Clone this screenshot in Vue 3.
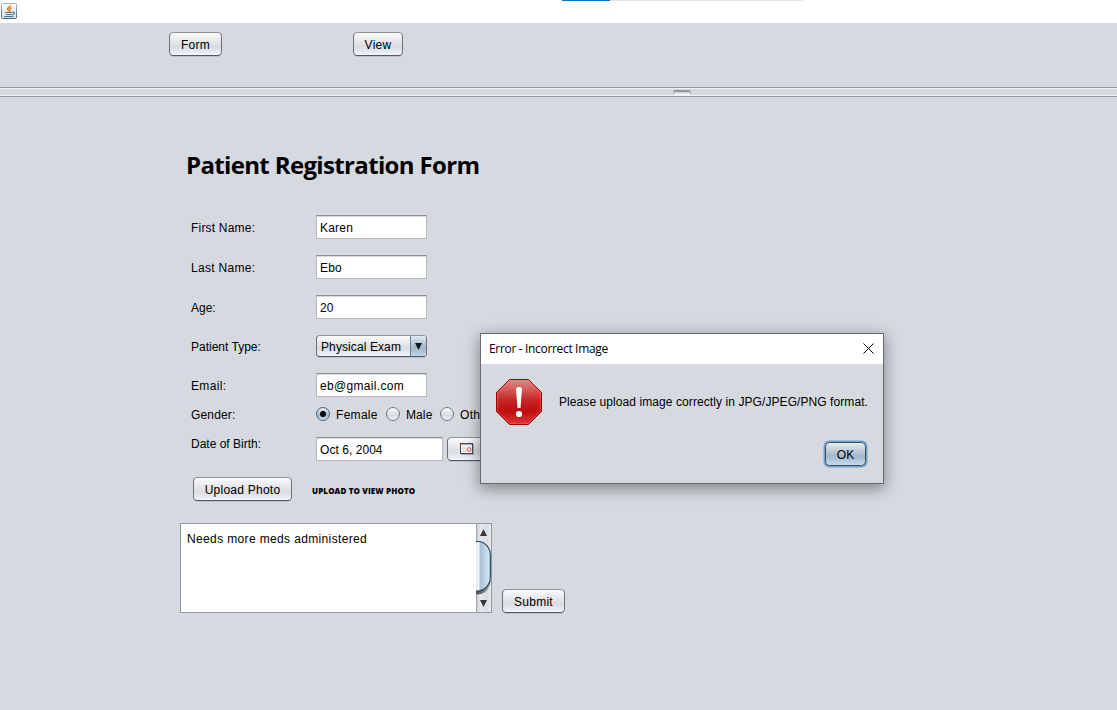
<script setup>
import { ref } from 'vue'

const fields = [
  { label: 'First Name:', value: 'Karen', key: 'first' },
  { label: 'Last Name:', value: 'Ebo', key: 'last' },
  { label: 'Age:', value: '20', key: 'age' },
]
const genders = ['Female', 'Male', 'Other']
const gender = ref('Female')
</script>

<template>
  <div class="window">
    <header class="titlebar">
      <svg class="java" viewBox="0 0 16 16" width="16" height="16">
        <defs>
          <linearGradient id="jv" x1="0" y1="0" x2="0" y2="1">
            <stop offset="0" stop-color="#fff" /><stop offset="1" stop-color="#d5e0e8" />
          </linearGradient>
          <linearGradient id="jb" x1="0" y1="0" x2="0" y2="1">
            <stop offset="0" stop-color="#9fb1bf" /><stop offset="1" stop-color="#456b88" />
          </linearGradient>
        </defs>
        <rect x=".5" y=".5" width="15" height="15" rx="1" fill="url(#jv)" stroke="url(#jb)" />
        <path d="M9.4 2.2C9.800 4 6 4.600 6.500 6.200c.2.8 1.200 1.200 1.200 2.300M10.800 4.600C8.500 5.400 8 6 8.900 6.900c.5.7.2 1.200-.4 1.800" fill="none" stroke="#e8811c" stroke-width="1.400" />
        <path d="M4 9.500h7.500M5 11.500h5.800M3.200 13.500h9M11.500 9.400c2.800-.6 2.600 2-.3 2.400" fill="none" stroke="#4f7593" stroke-width="1.200" />
      </svg>
      <div class="progress"><i></i></div>
    </header>

    <nav class="toolbar">
      <button class="btn form-btn">Form</button>
      <button class="btn view-btn">View</button>
    </nav>
    <div class="divider"><i class="grip"></i></div>

    <main class="form">
      <h1>Patient Registration Form</h1>
      <div v-for="f in fields" :key="f.key" class="row">
        <label :class="'l-' + f.key"><span>{{ f.label }}</span></label>
        <div class="input"><span :class="'v-' + f.key">{{ f.value }}</span></div>
      </div>
      <div class="row type-row">
        <label class="l-type"><span>Patient Type:</span></label>
        <div class="combo">
          <span class="combo-text">Physical Exam</span>
          <span class="arrow"><svg width="7" height="7" viewBox="0 0 7 7"><path d="M0 0h7L3.800 6.500h-.6z" fill="#101820" /></svg></span>
        </div>
      </div>
      <div class="row email-row">
        <label class="l-email"><span>Email:</span></label>
        <div class="input"><span class="v-email">eb@gmail.com</span></div>
      </div>
      <div class="row gender-row">
        <label class="l-gender"><span>Gender:</span></label>
        <div v-for="g in genders" :key="g" class="option" :class="'o-' + g.toLowerCase()" @click="gender = g">
          <i class="radio" :class="{ on: gender === g }"></i><span>{{ g }}</span>
        </div>
      </div>
      <div class="row date-row">
        <label class="l-dob"><span>Date of Birth:</span></label>
        <div class="input date"><span class="v-date">Oct 6, 2004</span></div>
        <button class="btn cal">
          <svg width="14" height="12" viewBox="0 0 14 12">
            <path d="M1 11.500h13M13.500 1v11" stroke="#aaa" />
            <rect x=".5" y=".5" width="12" height="10" fill="#f5f2f0" stroke="#454b53" />
            <path d="M1 1.500h4" stroke="#f3a63c" /><path d="M5 1.500h7" stroke="#8ab4e6" />
            <path d="M3.500 3v7M5.500 3v7M1 5.500h5M1 8h5" stroke="#ddd" stroke-width=".7" />
            <circle cx="9" cy="6.500" r="1.800" fill="#fff" stroke="#e86060" stroke-width="1.100" />
          </svg>
        </button>
      </div>
      <div class="upload-row">
        <button class="btn upload"><span>Upload Photo</span></button>
        <span class="hint">UPLOAD TO VIEW PHOTO</span>
      </div>
      <div class="notes-row">
        <div class="notes">
          <p><span>Needs more meds administered</span></p>
          <svg class="scroll" width="15" height="88" viewBox="0 0 15 88">
            <defs>
              <linearGradient id="tr"><stop offset="0" stop-color="#c7c8cc" /><stop offset=".3" stop-color="#e6e7ea" /><stop offset=".75" stop-color="#dddee1" /><stop offset="1" stop-color="#edeef0" /></linearGradient>
              <linearGradient id="th"><stop offset="0" stop-color="#dfe9f2" /><stop offset=".18" stop-color="#f4f8fb" /><stop offset=".3" stop-color="#aac0d5" /><stop offset=".55" stop-color="#b9cfe2" /><stop offset="1" stop-color="#d9f0ff" /></linearGradient>
              <linearGradient id="sh"><stop offset="0" stop-color="#44484e" /><stop offset="1" stop-color="#b4b5b9" /></linearGradient>
            </defs>
            <path d="M0 0h15v88H0z" fill="url(#tr)" />
            <path d="M.5 0v88" stroke="#a0a3ab" />
            <path d="M7.500 5 11 12H4zM4 76h7L7.500 83z" fill="#34373d" />
            <path d="M0 66h4c5 0 9-5 10-11l1 3c-2 8-6 12.500-15 12.500z" fill="url(#sh)" />
            <path d="M0 17.500h2C9 17.500 14.300 24 14.300 31v22c0 8-6 14-12.300 14H0z" fill="url(#th)" />
            <path d="M0 17.500h2C9 17.500 14.300 24 14.300 31v22c0 8-6 14-12.300 14H0" fill="none" stroke="#2d465d" stroke-width="1.200" />
          </svg>
        </div>
        <button class="btn submit">Submit</button>
      </div>
    </main>

    <section class="dialog">
      <header>
        <span class="dlg-title">Error - Incorrect Image</span>
        <svg width="11" height="11" viewBox="0 0 11 11"><path d="M.5.5l10 10M10.500.5l-10 10" stroke="#000" stroke-width="1" /></svg>
      </header>
      <div class="message">
        <svg width="46" height="46" viewBox="0 0 46 46">
          <defs>
            <linearGradient id="er" x1="0" y1="0" x2="0" y2="1"><stop offset="0" stop-color="#e38b8b" /><stop offset=".45" stop-color="#c42828" /><stop offset=".7" stop-color="#bb0d0d" /><stop offset="1" stop-color="#e23535" /></linearGradient>
          </defs>
          <path d="M13.500.5h19l13 13v19l-13 13h-19l-13-13v-19z" fill="url(#er)" stroke="#a80000" />
          <path d="M14 1.700h18L44.300 14v18L32 44.300H14L1.700 32V14z" fill="none" stroke="#f07070" stroke-opacity=".55" />
          <path d="M20 10C20 7.300 26 7.300 26 10L24.500 29h-3z" fill="#fff" />
          <circle cx="23" cy="35" r="3.100" fill="#fff" />
        </svg>
        <span class="msg">Please upload image correctly in JPG/JPEG/PNG format.</span>
      </div>
      <button class="btn ok"><span>OK</span></button>
    </section>
  </div>
</template>

<style>
body { margin: 0; background: #d6d9e0; }
</style>

<style scoped>
* { box-sizing: border-box; }
.window {
  position: relative;
  width: 1117px;
  height: 710px;
  overflow: hidden;
  background: #d6d9e0;
  color: #000;
  font: 12px/14px "Liberation Sans", Arial, sans-serif;
  white-space: nowrap;
}
.titlebar { display: flex; align-items: flex-start; height: 23px; background: #fff; }
.java { margin: 3px 0 0 1px; }
.progress { width: 241px; height: 1px; margin-left: 545px; background: #e5e5e5; }
.progress i { display: block; width: 48px; height: 1px; background: #0078d7; }
.toolbar { display: flex; height: 64px; padding: 9px 0 0 169px; }
.btn {
  display: flex;
  align-items: center;
  justify-content: center;
  height: 24px;
  padding: 1px 0 0;
  border: 1px solid #6d7077;
  border-top-color: #8f9299;
  border-bottom-color: #54575e;
  border-radius: 4.500px;
  background: linear-gradient(#fbfbfc, #e8e9ec 35%, #dadce1 62%, #e6e9f2 85%, #f3f6ff);
  box-shadow: 0 1px 0 #bfc2c9;
  font: inherit;
  color: #000;
  letter-spacing: .25px;
}
.form-btn { width: 53px; }
.view-btn { width: 50px; margin-left: 131px; }
.divider {
  height: 10px;
  padding: 2px 0 0 673px;
  border-top: 1px solid #9297a1;
  border-bottom: 1px solid #9297a1;
  box-shadow: inset 0 1px #eff0f3, inset 0 -1px #eceef2;
}
.grip { display: block; width: 18px; height: 5px; border: 1px solid #b2b5bd; border-top: 2px solid #92969f; border-bottom-color: #fff; border-radius: 2px; background: #d8dadf; }

.form { padding: 52px 0 0 191px; }
h1 {
  height: 32px;
  margin: 0 0 26px -5px;
  font: 700 24px/32px "Open Sans", "Noto Sans", sans-serif;
  letter-spacing: -.65px;
}
.row { display: flex; align-items: center; height: 40px; }
label { width: 125px; padding-top: 2px; }
.l-first { letter-spacing: .2px; }
.l-last { letter-spacing: .3px; }
.l-email { letter-spacing: .35px; }
.l-gender { letter-spacing: .15px; }
.input {
  display: flex;
  align-items: center;
  width: 111px;
  height: 24px;
  padding: 1px 3px 0;
  border: 1px solid #b8b9bd;
  border-top-color: #8d8e94;
  background: #fff;
  box-shadow: inset 0 1px #d8d9dc;
}
.v-first, .v-last, .v-age { letter-spacing: .2px; }
.v-email { letter-spacing: .33px; }
.v-date { letter-spacing: .05px; }
.type-row { height: 38px; }
.combo {
  display: flex;
  width: 111px;
  height: 22px;
  overflow: hidden;
  border: 1px solid #6d7077;
  border-top-color: #8f9299;
  border-bottom-color: #45586a;
  border-radius: 4px;
  background: linear-gradient(#fbfbfc, #e8e9ec 35%, #dadce1 62%, #f0f3fa);
  box-shadow: 0 1px 0 #bfc2c9;
}
.combo-text { width: 93px; padding: 4px 0 0 4px; letter-spacing: .1px; }
.arrow { display: flex; flex: 1; justify-content: center; padding-top: 7px; border-left: 1px solid #67829b; background: linear-gradient(#e3eaf1, #afc1d2 45%, #a0b6cb 60%, #bfd5ea); }
.gender-row { height: 18px; }
.option { display: flex; align-items: center; }
.option span { margin-left: 6px; padding-top: 2px; letter-spacing: .3px; }
.o-female { width: 70px; }
.o-male { width: 54px; }
.o-male span { letter-spacing: .1px; }
.radio { width: 14px; height: 14px; border: 1px solid #74777e; border-radius: 50%; background: linear-gradient(#fafafb, #d8dae0 60%, #f0f3fa); }
.radio.on { border-color: #4f6478; background: radial-gradient(circle at 50% 50%, #0c1015 0 2.700px, transparent 3.500px), linear-gradient(#e5ecf3, #a4b8cb 60%, #c4d9ec); }
.date-row { height: 52px; }
.date-row label { padding: 0 0 10px; }
.date { width: 127px; }
.cal { width: 40px; margin-left: 4px; padding: 0; }
.upload-row { display: flex; align-items: center; height: 28px; margin-left: 2px; }
.upload { width: 99px; }
.hint { margin: 4px 0 0 20px; font: 800 8px/10px "Open Sans", sans-serif; letter-spacing: .12px; }
.notes-row { display: flex; align-items: flex-end; margin: 20px 0 0 -11px; }
.notes { display: flex; width: 312px; height: 90px; border: 1px solid #9297a1; background: #fff; }
.notes p { width: 295px; margin: 0; padding: 8px 0 0 6px; letter-spacing: .36px; }
.submit { width: 63px; margin-left: 10px; }

.dialog {
  position: absolute;
  left: 480px;
  top: 333px;
  width: 404px;
  height: 151px;
  border: 1px solid #66686c;
  background: #d6d9e0;
  box-shadow: 0 4px 14px 1px rgba(0, 0, 0, .38);
}
.dialog header { display: flex; justify-content: space-between; align-items: center; height: 30px; padding: 0 10px 0 8px; background: #fff; }
.dialog header svg { margin: 0 -1px 1px 0; }
.dlg-title { font: 12px/16px "Open Sans", "Noto Sans", sans-serif; letter-spacing: -.33px; }
.message { display: flex; height: 46px; margin: 15px 0 0 15px; align-items: center; }
.msg { margin-left: 17px; letter-spacing: .08px; }
.ok { width: 41px; margin: 17px 0 0 344px; border-color: #3b4f63; background: linear-gradient(#e8edf2, #b9c7d4 40%, #a3b8cb 60%, #c4daee); box-shadow: 0 0 0 1.500px #71a0cf; letter-spacing: 0; }
</style>
